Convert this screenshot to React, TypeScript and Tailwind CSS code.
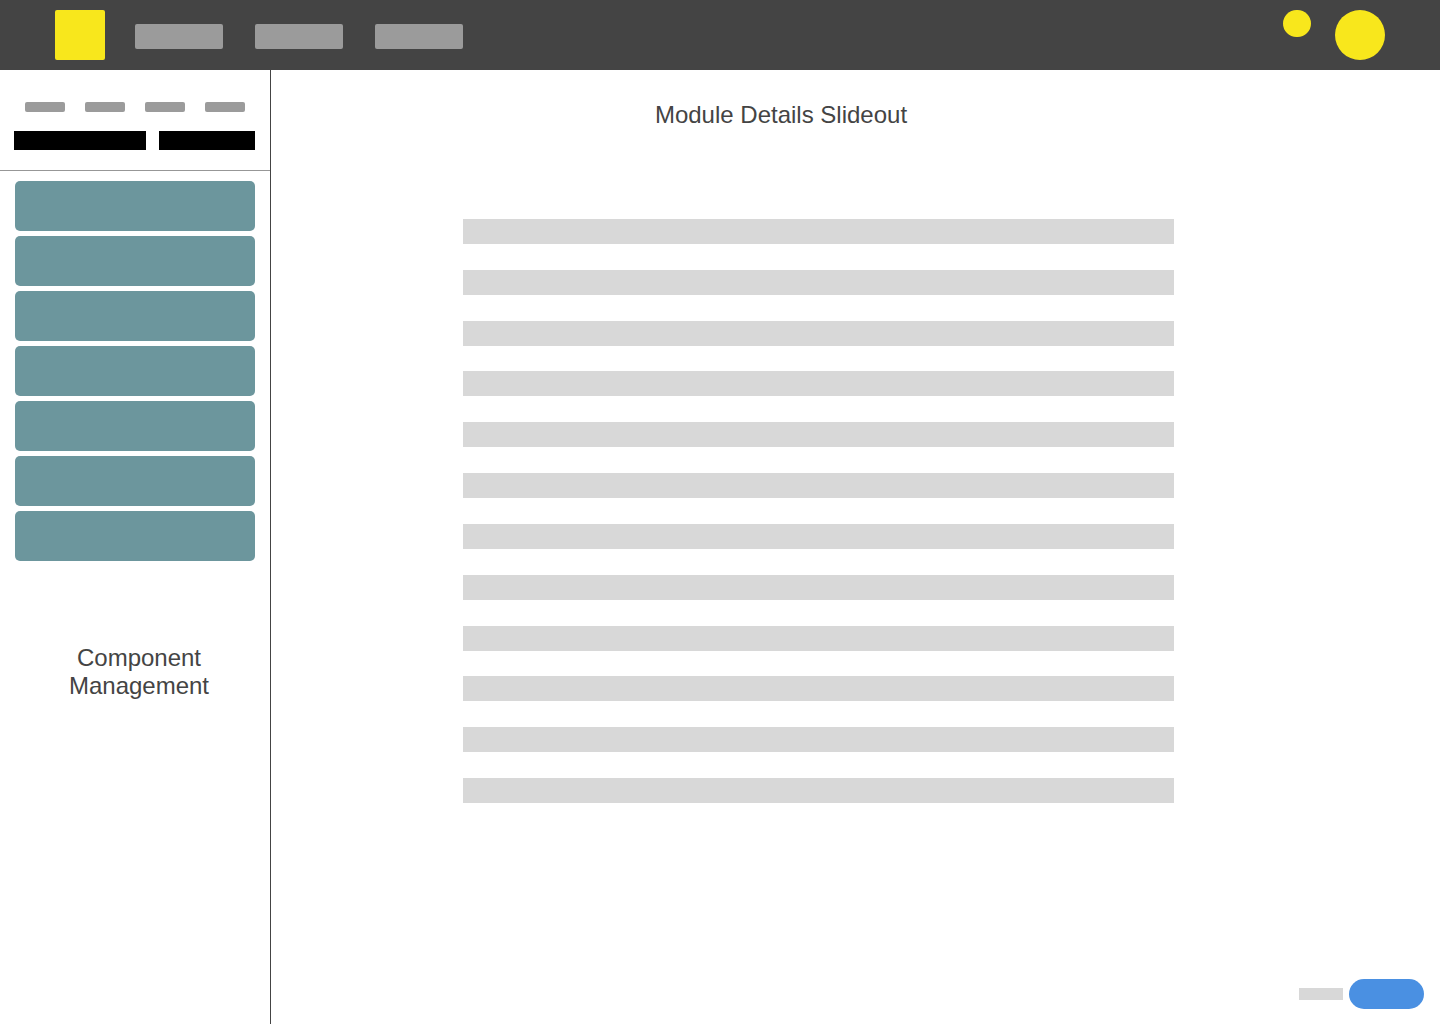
/**
 * Module details page: top bar, component sidebar and slideout content
 */
import clsx from 'clsx';

const NAV_ITEMS = ['Nav item 1', 'Nav item 2', 'Nav item 3'];
const SIDEBAR_TABS = ['Tab 1', 'Tab 2', 'Tab 3', 'Tab 4'];
const MODULES = Array.from({ length: 7 }, (_, i) => `Module ${i + 1}`);
const DETAIL_ROWS = Array.from({ length: 12 }, (_, i) => i);

function TopBar() {
  return (
    <header className="flex h-[70px] shrink-0 items-start bg-[#444444] px-[55px] py-[10px]">
      <a href="#" aria-label="Home" className="size-[50px] rounded-xs bg-[#f8e71c]" />

      <nav className="ml-[30px] flex gap-8 pt-[14px]">
        {NAV_ITEMS.map((item) => (
          <a key={item} href="#" aria-label={item} className="h-[25px] w-[88px] rounded-xs bg-[#9b9b9b]" />
        ))}
      </nav>

      {/* User actions */}
      <div className="ml-auto flex items-start gap-6">
        <button aria-label="Notifications" className="h-[27px] w-7 rounded-full bg-[#f8e71c]" />
        <button aria-label="Account" className="size-[50px] rounded-full bg-[#f8e71c]" />
      </div>
    </header>
  );
}

function Sidebar() {
  return (
    <aside className="w-[271px] shrink-0 border-r border-[#444444]">
      <div className="border-b border-[#979797] pt-8 pb-5">
        <div className="flex justify-between px-[25px]">
          {SIDEBAR_TABS.map((tab) => (
            <button key={tab} aria-label={tab} className="h-[10px] w-10 rounded-xs bg-[#9b9b9b]" />
          ))}
        </div>
        <div className="mt-[19px] flex justify-between pr-[15px] pl-[14px]">
          {['Search', 'Filter'].map((label, i) => (
            <button
              key={label}
              aria-label={label}
              className={clsx('h-[19px] bg-black', i === 0 ? 'w-[132px]' : 'w-24')}
            />
          ))}
        </div>
      </div>

      <ul className="flex flex-col gap-[5px] px-[15px] pt-[10px]">
        {MODULES.map((name) => (
          <li key={name}>
            <button aria-label={name} className="block h-[50px] w-full rounded-[5px] bg-[#6c969d]" />
          </li>
        ))}
      </ul>

      <h2 className="mt-[83px] pr-12 pl-14 text-center text-[24px] leading-[28px]">
        Component Management
      </h2>
    </aside>
  );
}

function ModuleDetails() {
  return (
    <main className="flex flex-1 flex-col">
      <h1 className="pt-[31px] pr-[149px] text-center text-[24px] leading-[28px]">
        Module Details Slideout
      </h1>

      <div className="mt-[90px] mr-[266px] ml-48 flex h-[584px] flex-col justify-between">
        {DETAIL_ROWS.map((row) => (
          <div key={row} className="h-[25px] bg-[#d8d8d8]" />
        ))}
      </div>

      {/* Footer actions */}
      <div className="mt-auto flex items-center justify-end gap-[6px] pr-4 pb-[15px]">
        <button aria-label="Cancel" className="h-3 w-11 bg-[#d8d8d8]" />
        <button aria-label="Save" className="h-[30px] w-[75px] rounded-full bg-[#4a90e2]" />
      </div>
    </main>
  );
}

export default function App() {
  return (
    <div className="flex min-h-screen flex-col bg-white font-['Liberation_Sans',Arial,sans-serif] text-[#444444]">
      <TopBar />
      <div className="flex flex-1">
        <Sidebar />
        <ModuleDetails />
      </div>
    </div>
  );
}
